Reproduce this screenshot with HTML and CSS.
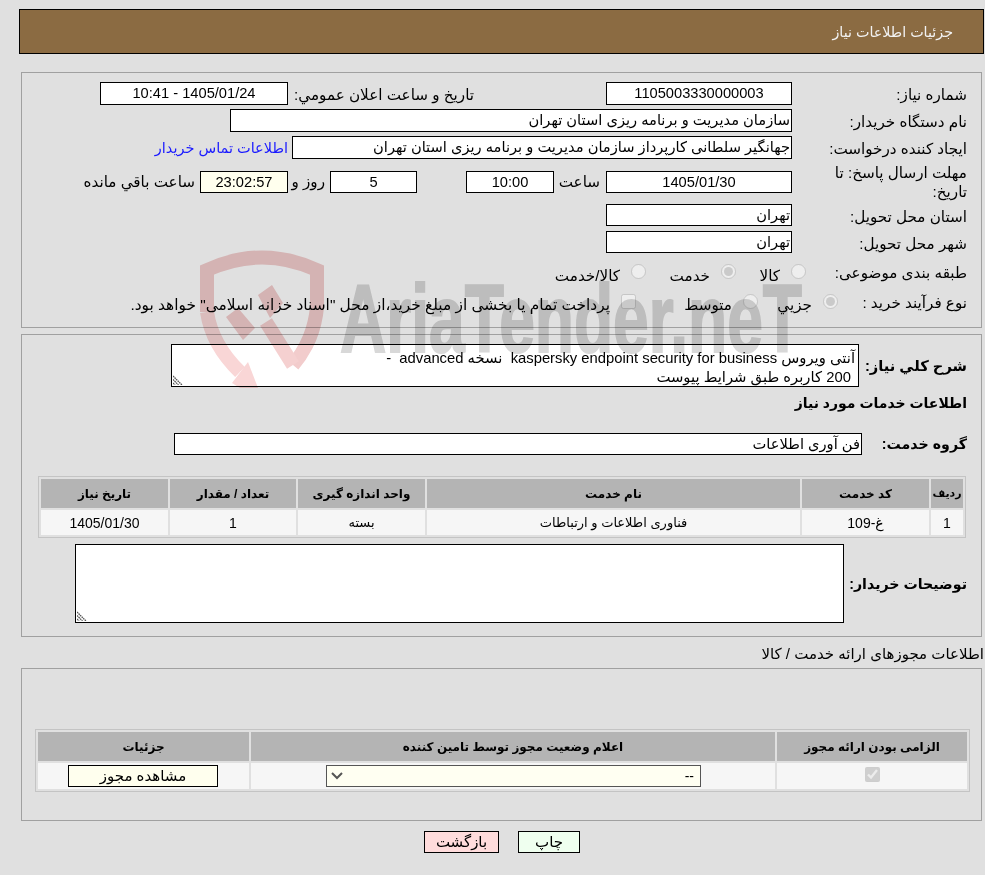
FILE: index.html
```html
<!DOCTYPE html>
<html lang="fa" dir="rtl">
<head>
<meta charset="utf-8">
<title>جزئیات اطلاعات نیاز</title>
<link rel="stylesheet" href="styles.css">
</head>
<body>
<div class="page">
  <header class="title-bar">جزئیات اطلاعات نیاز</header>

  <section class="panel panel-main">
    <div class="row r-first">
      <div class="label">شماره نیاز:</div>
      <div class="field w186 center">1105003330000003</div>
      <div class="label-inline pub-label">تاریخ و ساعت اعلان عمومي:</div>
      <div class="field w188 center ml5">1405/01/24 - 10:41</div>
    </div>
    <div class="row">
      <div class="label">نام دستگاه خریدار:</div>
      <div class="field w562">سازمان مدیریت و برنامه ریزی استان تهران</div>
    </div>
    <div class="row">
      <div class="label">ایجاد کننده درخواست:</div>
      <div class="field w500">جهانگیر سلطانی کارپرداز سازمان مدیریت و برنامه ریزی استان تهران</div>
      <a class="contact" href="#">اطلاعات تماس خریدار</a>
    </div>
    <div class="row r-deadline">
      <div class="label">مهلت ارسال پاسخ: تا تاریخ:</div>
      <div class="field w186 h22 center">1405/01/30</div>
      <div class="label-inline hour-label">ساعت</div>
      <div class="field w88 h22 center">10:00</div>
      <div class="field w87 h22 center days">5</div>
      <div class="label-inline day-label">روز و</div>
      <div class="field w88 h22 center timer">23:02:57</div>
      <div class="label-inline remain-label">ساعت باقي مانده</div>
    </div>
    <div class="row r-22">
      <div class="label">استان محل تحویل:</div>
      <div class="field w186 h22">تهران</div>
    </div>
    <div class="row r-22 r-city">
      <div class="label">شهر محل تحویل:</div>
      <div class="field w186 h22">تهران</div>
    </div>
    <div class="row r-cat">
      <div class="label">طبقه بندی موضوعی:</div>
      <div class="choices cats">
        <label class="choice c-kala"><input type="radio" name="cat" disabled><span>کالا</span></label>
        <label class="choice c-service"><input type="radio" name="cat" checked disabled><span>خدمت</span></label>
        <label class="choice"><input type="radio" name="cat" disabled><span>کالا/خدمت</span></label>
      </div>
    </div>
    <div class="row r-proc">
      <div class="label">نوع فرآیند خرید :</div>
      <div class="choices procs">
        <label class="choice c-small"><input type="radio" name="proc" checked disabled><span>جزيي</span></label>
        <label class="choice c-medium"><input type="radio" name="proc" disabled><span>متوسط</span></label>
        <label class="choice c-treasury"><input type="checkbox" disabled><span>پرداخت تمام یا بخشی از مبلغ خرید،از محل "اسناد خزانه اسلامی" خواهد بود.</span></label>
      </div>
    </div>
  </section>

  <section class="panel panel-need">
    <div class="row r-desc">
      <div class="label-bold desc-label">شرح کلي نیاز:</div>
      <textarea class="memo memo-desc" readonly>آنتی ویروس kaspersky endpoint security for business  نسخه advanced  - 
 200 کاربره طبق شرایط پیوست</textarea>
    </div>
    <h2 class="sub-title">اطلاعات خدمات مورد نیاز</h2>
    <div class="row r-group">
      <div class="label-bold group-label">گروه خدمت:</div>
      <div class="field w688 h22 group-field">فن آوری اطلاعات</div>
    </div>
    <table class="grid grid-items">
      <colgroup><col class="g1-a"><col class="g1-b"><col class="g1-c"><col class="g1-d"><col class="g1-e"><col class="g1-f"></colgroup>
      <thead>
        <tr><th class="th-narrow">رديف</th><th>کد خدمت</th><th>نام خدمت</th><th>واحد اندازه گیری</th><th>تعداد / مقدار</th><th>تاریخ نیاز</th></tr>
      </thead>
      <tbody>
        <tr><td>1</td><td>غ-109</td><td class="ar-cell">فناوری اطلاعات و ارتباطات</td><td class="ar-cell">بسته</td><td>1</td><td>1405/01/30</td></tr>
      </tbody>
    </table>
    <div class="row r-note">
      <div class="label-bold note-label">توضیحات خریدار:</div>
      <textarea class="memo memo-note" readonly></textarea>
    </div>
  </section>

  <h3 class="section-title">اطلاعات مجوزهای ارائه خدمت / کالا</h3>

  <section class="panel panel-license">
    <table class="grid grid-license">
      <colgroup><col class="g2-a"><col class="g2-b"><col class="g2-c"></colgroup>
      <thead>
        <tr><th>الزامی بودن ارائه مجوز</th><th>اعلام وضعیت مجوز توسط تامین کننده</th><th>جزئیات</th></tr>
      </thead>
      <tbody>
        <tr>
          <td><input class="req-check" type="checkbox" checked disabled></td>
          <td><select class="status"><option>--</option></select></td>
          <td><button class="btn-view" type="button">مشاهده مجوز</button></td>
        </tr>
      </tbody>
    </table>
  </section>

  <div class="actions">
    <button class="btn btn-print" type="button">چاپ</button>
    <button class="btn btn-back" type="button">بازگشت</button>
  </div>

  <svg class="watermark" viewBox="0 0 985 388" width="985" height="388" aria-hidden="true">
    <g fill="none" stroke="#f2cccc" stroke-width="14">
      <path d="M207 312 L207 270 Q262 245 317 270 L317 307 Q314 340 293 365"/>
      <path d="M207 312 Q212 345 240 372" stroke="#f9d6d6"/>
      <path d="M266 322 L293 365" stroke="#f5d0d0"/>
    </g>
    <polygon fill="#f9d6d6" points="248,362 232,383 240,388 258,388"/>
    <polygon fill="#f2cccc" points="226,317 238,308 255,328 243,340"/>
    <polygon fill="#f2cccc" points="258,295 272,285 283,303 270,318"/>
    <text class="wm-text" x="340" y="352" textLength="462" lengthAdjust="spacingAndGlyphs">AriaTender.neT</text>
  </svg>
</div>
</body>
</html>
```
FILE: styles.css
```css
* { box-sizing: border-box; }
html, body { margin: 0; padding: 0; background: #e0e0e0; }
body {
  font-family: "Liberation Sans", "DejaVu Sans", sans-serif;
  font-size: 15.2px;
  color: #000;
  direction: rtl;
}
.page { position: relative; width: 985px; height: 875px; overflow: hidden; padding: 9px 1px 0 3px; }

.title-bar {
  height: 45px;
  margin-left: 16px;
  background: #8b6b42;
  border: 1px solid #000;
  color: #f2f2f2;
  line-height: 45px;
  padding-right: 30px;
  font-size: 14.3px;
}

.panel { border: 1px solid #a0a0a0; margin-left: 18px; margin-right: 2px; padding-right: 14px; }
.panel-main { margin-top: 18px; height: 256px; padding-top: 9px; }
.panel-need { margin-top: 6px; height: 303px; padding-top: 9px; }
.panel-license { height: 153px; padding: 60px 11px 0 0; }

.row { display: flex; align-items: center; min-height: 23px; margin-bottom: 4px; }
.r-deadline { height: 37px; }
.r-22 { min-height: 22px; }
.r-city { margin-top: 5px; }
.r-cat { height: 26px; margin-top: 7px; margin-bottom: 3px; }
.r-proc { height: 26px; margin-bottom: 0; }

.label { width: 175px; flex: none; padding: 2px 0 0 20px; line-height: 19px; }
.r-deadline .label { padding-top: 0; }
.r-cat .label { margin-top: -4px; }
.r-proc .label { margin-top: -2px; }
.label-inline { flex: none; white-space: nowrap; }
.label-bold { flex: none; font-weight: 700; font-size: 14.2px; white-space: nowrap; }

.field {
  flex: none;
  height: 23px;
  line-height: 21px;
  font-size: 14.67px;
  background: #fff;
  border: 1px solid #000;
  padding: 0 1px;
  white-space: nowrap;
  overflow: hidden;
}
.center { text-align: center; }
.w186 { width: 186px; }
.w188 { width: 188px; }
.w562 { width: 562px; }
.w500 { width: 500px; }
.w88 { width: 88px; }
.w87 { width: 87px; }
.w688 { width: 688px; }
.h22 { height: 22px; line-height: 20px; }
.ml5 { margin-right: 5px; }

.pub-label { width: 181px; margin-right: 132px; padding-top: 2px; }
.contact { color: #1a1aff; text-decoration: none; margin-right: 4px; white-space: nowrap; font-size: 14.5px; }
.hour-label { width: 52px; padding-right: 6px; }
.days { margin-right: 49px; }
.day-label { width: 42px; padding-right: 5px; }
.timer { background: #ffffee; }
.remain-label { padding-right: 5px; }

.choices { display: flex; align-items: center; height: 100%; }
.cats { margin-right: -14px; }
.procs { margin-right: -46px; }
.choice { display: flex; align-items: center; white-space: nowrap; }
.choice input { margin: 0 0 0 11px; flex: none; width: 15px; height: 15px; position: relative; top: -2px; }
.cats .choice span { margin-top: 5px; }
.procs .choice span { margin-top: 6px; }
.c-kala { width: 70px; }
.c-service { width: 90px; }
.c-small { width: 80px; }
.c-medium { width: 122px; }
.procs .choice input { top: -1px; }
.c-treasury span { font-size: 15.4px; }

.r-desc { align-items: flex-start; margin-bottom: 0; }
.desc-label { width: 108px; margin-top: 13px; font-size: 14.7px; }
.memo {
  display: block;
  flex: none;
  font: inherit;
  font-size: 14.8px;
  border: 1px solid #000;
  direction: rtl;
  padding: 4px 3px 0;
  line-height: 19px;
  outline: none;
  overflow: hidden;
  resize: none;
  background: #fff url("data:image/svg+xml,%3Csvg xmlns='http://www.w3.org/2000/svg' width='10' height='10'%3E%3Cg stroke='%23555' stroke-width='1.3' stroke-dasharray='1.6 .6' fill='none'%3E%3Cpath d='M0 1L9 10M0 4.5L5.5 10M0 8L2 10'/%3E%3C/g%3E%3C/svg%3E") no-repeat left 1px bottom 1px;
}
.memo-desc { width: 688px; height: 43px; }
.memo-note { width: 769px; height: 79px; }
.sub-title { margin: 5px 0 0; font-size: 14px; font-weight: 700; line-height: 22px; }
.r-group { margin-top: 18px; margin-bottom: 0; }
.group-label { width: 105px; }
.group-field { text-align: right; padding-right: 1px; }

.grid { border-collapse: separate; border-spacing: 2px; border: 1px solid #c4c4c4; table-layout: fixed; }
.grid th { background: #b4b4b4; font-size: 12px; font-weight: 700; height: 29px; padding: 0; }
.grid th.th-narrow { font-size: 11px; }
.grid td { background: #f6f6f6; text-align: center; padding: 0; font-size: 14px; }
.grid td.ar-cell { font-size: 13px; }
.grid-items { width: 928px; margin-top: 21px; margin-right: 1px; }
.grid-items td { height: 25px; }
.g1-a { width: 32px; }
.g1-b { width: 127px; }
.g1-c { width: 373px; }
.g1-d { width: 127px; }
.g1-e { width: 126px; }
.g1-f { width: 127px; }
.r-note { margin-top: 6px; }
.note-label { width: 123px; }

.section-title { margin: 7px 0 4px -1px; font-size: 15px; font-weight: 400; line-height: 20px; }

.grid-license { width: 935px; }
.grid-license td { height: 26px; }
.g2-a { width: 190px; }
.g2-b { width: 524px; }
.g2-c { width: 211px; }
.req-check { width: 15px; height: 15px; margin: 0; }
.status {
  display: block;
  margin: 0 74px 0 0;
  width: 375px;
  height: 22px;
  appearance: none;
  padding: 0 6px 0 0;
  background: #fffff2 url("data:image/svg+xml,%3Csvg xmlns='http://www.w3.org/2000/svg' width='12' height='8'%3E%3Cpath d='M1 1l5 5 5-5' fill='none' stroke='%23555' stroke-width='2'/%3E%3C/svg%3E") no-repeat left 4px center;
  border: 1px solid #555;
  font-size: 14px;
  font-family: inherit;
  border-radius: 0;
}
.btn-view {
  display: block;
  margin: 0 31px 0 0;
  width: 150px;
  height: 22px;
  padding: 0;
  font: inherit;
  font-size: 15px;
  color: #000;
  background: #ffffee;
  border: 1px solid #000;
}

.actions { display: flex; justify-content: center; gap: 19px; margin-top: 10px; padding-left: 17px; }
.btn { height: 22px; padding: 0; font: inherit; font-size: 15px; color: #000; border: 1px solid #000; }
.btn-print { width: 62px; background: #efffef; }
.btn-back { width: 75px; background: #ffdcdc; }

.watermark { position: absolute; top: 0; left: 0; pointer-events: none; mix-blend-mode: multiply; }
.wm-text { direction: ltr; font-family: "Liberation Sans", sans-serif; font-weight: 700; font-size: 96px; fill: #d8d8d8; stroke: #d8d8d8; stroke-width: 2px; }
```
